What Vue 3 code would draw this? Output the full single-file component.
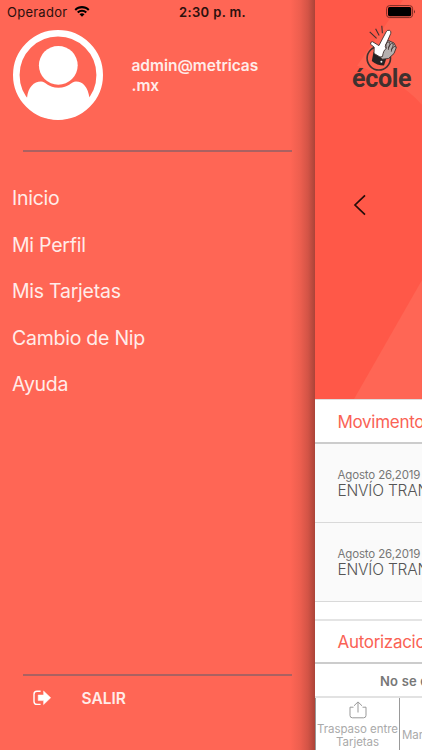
<script setup>
const menu = ['Inicio', 'Mi Perfil', 'Mis Tarjetas', 'Cambio de Nip', 'Ayuda']
const movements = [
  { date: 'Agosto 26,2019', title: 'ENVÍO TRAN' },
  { date: 'Agosto 26,2019', title: 'ENVÍO TRAN' },
]
</script>

<template>
  <div class="screen">
    <div class="status">
      <span class="carrier">Operador</span>
      <svg class="wifi" viewBox="0 0 16 12">
        <path d="M0.5 4.2C4.7 0 11.3 0 15.5 4.2L14 5.7C10.6 2.5 5.4 2.5 2 5.7Z" />
        <path d="M3 6.7C5.8 4 10.2 4 13 6.7L11.5 8.2C9.5 6.4 6.5 6.4 4.5 8.2Z" />
        <path d="M5.5 9.2C7 7.9 9 7.9 10.5 9.2L8 11.7Z" />
      </svg>
      <span class="clock">2:30 p. m.</span>
      <svg class="battery" viewBox="0 0 30 14">
        <rect x="0.6" y="0.6" width="26" height="12" rx="3" fill="none" stroke="#7c2c24" stroke-width="1" />
        <rect x="2" y="2" width="23.2" height="9.2" rx="1.6" />
        <path d="M28 4.6Q29.6 6.6 28 8.6Z" fill="#5c211b" />
      </svg>
    </div>

    <aside class="drawer">
      <header class="profile">
        <svg class="avatar" viewBox="0 0 90 90">
          <circle cx="45" cy="45" r="41.7" fill="none" stroke="#fff" stroke-width="6.6" />
          <circle cx="45.3" cy="35.3" r="19.4" fill="#fff" />
          <path d="M14 68C15 57 21 51.5 28 51.5C33 51.5 35 57.8 45.5 57.8C56 57.8 58 51.5 63 51.5C70 51.5 75 57 76.5 68L76 74C68 84 57 89.5 45 89.5C32 89.5 21 84 14 74Z" fill="#fff" />
        </svg>
        <div class="email">admin@metricas<br />.mx</div>
      </header>
      <nav class="menu">
        <a v-for="item in menu" :key="item">{{ item }}</a>
      </nav>
      <footer class="logout">
        <svg class="exit" viewBox="0 0 18 16">
          <path d="M7.6 1.2H4Q1 1.2 1 4.2V11.4Q1 14.4 4 14.4H7.6" fill="none" stroke="#fff" stroke-width="1.4" />
          <path d="M5.2 5H10.6V1L17.7 7.8L10.6 14.6V10.6H5.2Z" fill="#fff" stroke="#fff" stroke-width=".5" stroke-linejoin="round" />
        </svg>
        <span>SALIR</span>
      </footer>
    </aside>

    <main class="page">
      <section class="hero">
        <svg class="backdrop" viewBox="0 0 107 400">
          <path d="M107 0H88L42 66Q84 79 107 105Z" fill="#ff6351" />
          <path d="M107 281L39 400H107Z" fill="#ff6655" />
        </svg>
        <div class="brand">
          <svg class="hand" viewBox="0 0 32 46">
            <circle cx="12.8" cy="33.3" r="11.7" fill="none" stroke="#40312f" stroke-width="1.6" />
            <path d="M3.7 6.8L10.6 13.4M9.6 3.8L13.2 10.6M15.8 .7L16.4 8.2" fill="none" stroke="#40312f" stroke-width="1.1" />
            <path d="M7.5 27L20.5 33L18 40.5Q11 40.5 5.8 36Z" fill="#252324" />
            <path d="M18 17.5L22.5 15.5L28 18L30.3 22.5L28 28.5L22.5 33.5L16.5 34.2L13 31Z" fill="#b5b0af" stroke="#40312f" stroke-width=".9" />
            <path d="M20.2 6.8Q21.4 4.6 23.6 5.4Q25.6 6.3 24.7 8.6L19.8 19.8L20.2 23.5Q17.3 25.2 16.5 31.5L14 32L8 28.4L8.2 22.2L4.5 19.2Q4.2 16.7 6.5 16.7L12.9 20.6Z" fill="#fff" stroke="#40312f" stroke-width=".9" stroke-linejoin="round" />
            <path d="M20.2 23.5Q18.4 21.5 20 19Q21.8 15.6 23.8 17.4Q24.6 18.3 22.4 23M22.4 24.8Q22.1 23 24 19.9Q25.7 17.2 27.3 19Q27.6 20.2 25.2 25M25.3 26.7Q25.2 24.6 27 22.4Q29.3 20.2 29.9 22.6" fill="none" stroke="#40312f" stroke-width=".85" />
            <circle cx="15.4" cy="36.7" r="1" fill="#eee" />
          </svg>
          <span class="name">école</span>
        </div>
        <svg class="back" viewBox="0 0 14 22"><path d="M12 1.4L2 11L12 20.6" fill="none" stroke="#240d0a" stroke-width="1.7" /></svg>
      </section>
      <h2 class="heading">Movimento</h2>
      <article v-for="(m, i) in movements" :key="i" class="row">
        <span class="date">{{ m.date }}</span>
        <span class="title">{{ m.title }}</span>
      </article>
      <div class="gap"></div>
      <h2 class="heading second">Autorizacio</h2>
      <div class="empty">No se e</div>
      <nav class="tabs">
        <div class="tab">
          <svg class="share" viewBox="0 0 18 18"><path d="M4.5 6.2H1V14.4Q1 16.8 3.4 16.8H14.6Q17 16.8 17 14.4V6.2H13.5M9 11.5V1M5 4.8L9 .9L13 4.8" fill="none" stroke="#999" stroke-width="1" /></svg>
          <span>Traspaso entre<br />Tarjetas</span>
        </div>
        <div class="tab next"><span>Mar</span></div>
      </nav>
    </main>
  </div>
</template>

<style>
body { margin: 0; overflow: hidden; }
</style>

<style scoped>
.screen { position: relative; display: flex; width: 422px; height: 750px; overflow: hidden; background: #ff6655; font-family: Inter, "Liberation Sans", sans-serif; }
.status { position: absolute; z-index: 2; top: 0; left: 0; width: 422px; height: 24px; color: #2b100d; }
.carrier { position: absolute; left: 7px; top: 4px; font-size: 13px; line-height: 16px; letter-spacing: .25px; }
.wifi { position: absolute; left: 74px; top: 5px; width: 16px; height: 12px; }
.clock { position: absolute; left: 179px; top: 4px; font-size: 13px; line-height: 16px; font-weight: 600; letter-spacing: .36px; white-space: nowrap; }
.battery { position: absolute; left: 386px; top: 5px; width: 30px; height: 14px; }
.drawer { display: flex; flex-direction: column; flex: none; box-sizing: border-box; width: 315px; height: 750px; color: #ffece9; background: linear-gradient(90deg, rgba(80, 30, 25, 0) 290px, rgba(80, 30, 25, .1) 300px, rgba(80, 30, 25, .25) 308px, rgba(80, 30, 25, .48) 315px); }
.profile { display: flex; box-sizing: border-box; height: 152px; margin: 0 23px; padding-top: 30px; border-bottom: 2px solid #ab6161; }
.avatar { width: 90px; height: 90px; margin-left: -10px; flex: none; }
.email { padding-top: 26px; margin-left: 28.5px; font-size: 15.5px; line-height: 20px; font-weight: 600; letter-spacing: -.03px; white-space: nowrap; }
.menu { display: flex; flex-direction: column; padding: 23px 12px 0; flex: 1; }
.menu a { height: 46.6px; line-height: 46.6px; font-size: 19.5px; letter-spacing: -.25px; }
.logout { display: flex; box-sizing: border-box; height: 76px; margin: 0 23px; padding-top: 14px; border-top: 2px solid #ab6161; font-size: 15.5px; line-height: 18px; font-weight: 600; }
.exit { width: 18px; height: 16px; margin-left: 10px; }
.logout span { margin-left: 30.5px; }
.page { display: flex; flex-direction: column; flex: none; width: 107px; overflow: hidden; background: #fff; }
.hero { position: relative; flex: none; height: 399px; background: #ff5848; }
.backdrop { position: absolute; left: 0; top: 0; width: 107px; height: 399px; }
.brand { position: absolute; left: 37px; top: 25px; width: 70px; }
.hand { display: block; width: 32px; height: 46px; margin-left: 14px; }
.name { display: block; margin-top: -6px; font: 700 25px/28px Roboto, sans-serif; letter-spacing: -.3px; color: #40312f; }
.back { position: absolute; left: 38px; top: 194px; width: 14px; height: 22px; }
.heading { box-sizing: border-box; flex: none; height: 45px; margin: 0; padding-left: 22.5px; border-top: 1.5px solid #ddd; border-bottom: 2px solid #ccc; color: #fa6255; font-size: 17px; line-height: 45px; font-weight: 400; letter-spacing: -.3px; }
.row { display: flex; flex-direction: column; flex: none; box-sizing: border-box; height: 79px; padding: 23px 0 0 22.5px; border-bottom: 1.5px solid #d9d9d9; background: #fafafa; white-space: nowrap; }
.date { font-size: 11.5px; line-height: 16px; color: #777; letter-spacing: -.15px; }
.title { font-size: 15.5px; line-height: 16px; color: #555; font-weight: 300; letter-spacing: -.2px; }
.gap { height: 17px; flex: none; }
.second { height: 45px; border-top: 2px solid #e4e4e4; line-height: 43px; }
.empty { box-sizing: border-box; flex: none; height: 34px; padding-left: 65px; border-bottom: 2px solid #e2e2e2; font-size: 13px; line-height: 34px; font-weight: 600; color: #777; letter-spacing: .2px; white-space: nowrap; }
.tabs { display: flex; flex: none; height: 52px; color: #aaa; font-size: 11.5px; line-height: 13px; }
.tab { box-sizing: border-box; flex: none; width: 85px; border-left: 1px solid #999; border-right: 1px solid #999; text-align: center; white-space: nowrap; }
.tab span { display: block; letter-spacing: -.05px; }
.share { display: block; width: 18px; height: 18px; margin: 3px auto 4px; }
.next { width: 22px; border: 0; padding: 31px 0 0 2px; text-align: left; }
</style>
